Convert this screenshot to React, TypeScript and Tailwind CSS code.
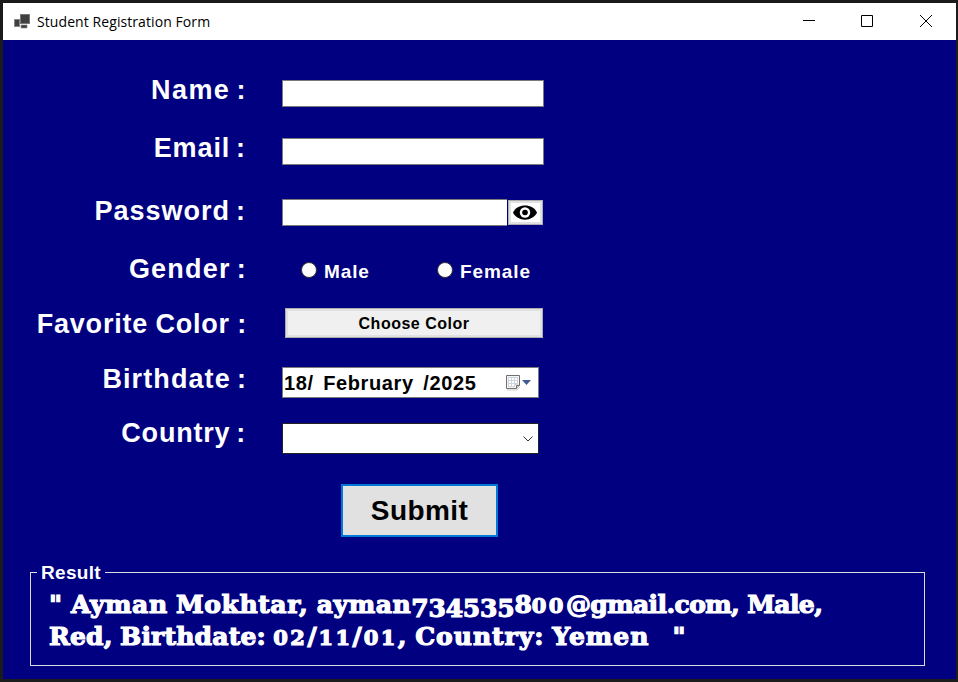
import type { ReactNode } from "react";

const ARIAL = "font-['Liberation_Sans',Arial,sans-serif] font-bold";

function Row({ label, h, spacing, end, children }: { label: string; h: string; spacing: string; end: string; children: ReactNode }) {
  return (
    <div className={`flex items-start ${h}`}>
      <div className={`w-[246px] shrink-0 text-right text-[27px] leading-[30px] whitespace-pre text-white ${ARIAL} ${spacing} ${end}`}>{label}</div>
      <div className="ml-[33px] flex items-start">{children}</div>
    </div>
  );
}

function Radio({ label, className }: { label: string; className: string }) {
  return (
    <label className={`flex items-start ${className}`}>
      <span className="block size-[16px] rounded-full border border-[#333] bg-white" />
      <span className={`ml-[7px] text-[19px] leading-[20px] tracking-[0.9px] text-white ${ARIAL}`}>{label}</span>
    </label>
  );
}

function Low({ children }: { children: ReactNode }) {
  return <span className="align-[-4px] leading-none tracking-[-0.2px]">{children}</span>;
}

function Small({ children }: { children: ReactNode }) {
  return <span className="text-[21px] leading-none tracking-[2.4px]">{children}</span>;
}

export default function App() {
  return (
    <div className="h-[682px] w-[958px] overflow-hidden border-t-[3px] border-r-2 border-b-[3px] border-l-[3px] border-[#1c1b1b] bg-[#000080]">
      <header className="flex h-[37px] items-center bg-white">
        <svg className="ml-[11px] shrink-0" width="17" height="16" viewBox="0 0 17 16">
          <rect x="6.5" y="0.5" width="9" height="9" fill="#3f3f3f" stroke="#777" />
          <rect x="0.5" y="5.5" width="5" height="7" fill="#3f3f3f" stroke="#888" />
          <rect x="7" y="11" width="6" height="3" fill="#3f3f3f" stroke="#888" strokeWidth=".6" />
        </svg>
        <h1 className="ml-[6px] font-['Open_Sans',sans-serif] text-[14px] tracking-[0.08px] whitespace-nowrap text-black">Student Registration Form</h1>
        <svg className="mr-[23px] mb-[2px] ml-auto shrink-0" width="130" height="14" viewBox="0 0 130 14" fill="none" stroke="#000">
          <path d="M0 6.5h12M58.5 1.5h11v11h-11z" />
          <path d="M117 1l12 12M129 1l-12 12" />
        </svg>
      </header>

      <main className="pt-[35px]">
        <Row label="Name :" h="h-[58px]" spacing="tracking-[1.4px] [word-spacing:-2.5px]" end="pr-[2px]">
          <input className="mt-[5px] h-[27px] w-[262px] border border-[#7a7a7a] bg-white" />
        </Row>
        <Row label="Email :" h="h-[63px]" spacing="tracking-[0.9px] [word-spacing:-2.5px]" end="pr-[3px]">
          <input className="mt-[5px] h-[27px] w-[262px] border border-[#7a7a7a] bg-white" />
        </Row>
        <Row label="Password :" h="h-[58px]" spacing="tracking-[1px] [word-spacing:-2.5px]" end="pr-[3px]">
          <input className="mt-[3px] h-[27px] w-[225px] border border-r-0 border-[#7a7a7a] bg-white" />
          <button className="mt-[4px] ml-px flex h-[25px] w-[35px] items-center border border-[#adadad] bg-white pl-[4px] shadow-[inset_0_0_0_2px_#e1e1e1]">
            <svg width="24" height="15" viewBox="0 0 24 15">
              <path d="M0 7.5C4-2 20-2 24 7.500 20 17 4 17 0 7.500z" fill="#000" />
              <circle cx="12" cy="7.5" r="5.2" fill="#fff" />
              <circle cx="12" cy="7.5" r="2.8" fill="#000" />
            </svg>
          </button>
        </Row>
        <Row label="Gender :" h="h-[55px]" spacing="tracking-[1.2px] [word-spacing:-2.5px]" end="pr-[2px]">
          <div className="mt-[8px] flex">
            <Radio label="Male" className="ml-[19px] w-[136px]" />
            <Radio label="Female" className="" />
          </div>
        </Row>
        <Row label="Favorite Color :" h="h-[55px]" spacing="tracking-[0.8px] [word-spacing:-1px]" end="pr-[2px]">
          <button className={`-mt-px ml-[3px] h-[30px] w-[258px] border border-[#adadad] bg-[#f0f0f0] pt-px text-[16px] leading-[26px] tracking-[0.5px] text-black shadow-[inset_0_0_0_2px_#e1e1e1] ${ARIAL}`}>Choose Color</button>
        </Row>
        <Row label="Birthdate :" h="h-[54px]" spacing="tracking-[1.1px] [word-spacing:-2.5px]" end="pr-[2px]">
          <div className="mt-[3px] flex h-[31px] w-[257px] items-center border border-[#7a7a7a] bg-white">
            <span className={`ml-px w-[221px] text-[20px] leading-[24px] tracking-[0.6px] whitespace-pre text-black [word-spacing:3.500px] ${ARIAL}`}>18/ February /2025</span>
            <svg className="shrink-0" width="27" height="17" viewBox="0 0 27 17">
              <path d="M2 16h10l3-3" fill="none" stroke="#ccc" />
              <path d="M1.5 1.5h13v10l-3 3h-10z" fill="#f4f5f7" stroke="#766d69" />
              <path d="M3 3h10v8h-3v2H3z" fill="#cdd4dd" />
              <path d="M4 4h2v2H4zm3 0h2v2H7zm3 0h2v2h-2zM4 7h2v2H4zm3 0h2v2H7zm3 0h2v2h-2zM4 10h2v2H4zm3 0h2v2H7z" fill="#fff" />
              <path d="M11.5 14.5v-3h3" fill="#ddd" stroke="#766d69" />
              <path d="M17 6h9l-4.500 5z" fill="#3f5e91" />
            </svg>
          </div>
        </Row>
        <Row label="Country :" h="h-[66px]" spacing="tracking-[0.8px] [word-spacing:-2.5px]" end="pr-[3px]">
          <div className="mt-[5px] flex h-[31px] w-[257px] items-center justify-end border border-[#222] bg-white pr-[5px]">
            <svg width="10" height="6" viewBox="0 0 10 6" fill="none" stroke="#333">
              <path d="M.5.5L5 5 9.500.5" />
            </svg>
          </div>
        </Row>

        <button className={`ml-[338px] block h-[53px] w-[157px] border-2 border-[#0078d7] bg-[#e1e1e1] text-[28px] leading-[49px] tracking-[0.4px] text-black ${ARIAL}`}>Submit</button>

        <fieldset className="mt-[25px] ml-[27px] h-[104px] w-[895px] border border-[#dcdcdc]">
          <legend className={`ml-[6px] h-[20px] px-[4px] text-[19px] leading-[22px] tracking-[0.3px] text-white ${ARIAL}`}>Result</legend>
          <div className="mt-[7px] ml-[18px] font-['DejaVu_Serif',serif] text-[25px] leading-[32px] font-bold whitespace-pre text-white [-webkit-text-stroke:1.2px_white]">
            <p className="h-[32px]">
              <span className="tracking-[0.6px] [word-spacing:-1px]">" Ayman Mokhtar, ayman</span>
              <Low>734535</Low>8<Small>00</Small>
              <span className="tracking-[-0.6px]">@gmail.com, Male,</span>
            </p>
            <p className="h-[32px]">
              <span className="tracking-[0.2px] [word-spacing:-1.500px]">Red, Birthdate: </span>
              <Small>02</Small>
              <span className="tracking-[2px]">/</span>
              <Small>11</Small>
              <span className="tracking-[2px]">/</span>
              <Small>01</Small>
              <span className="tracking-[1px] [word-spacing:-2px]">, Country: Yemen   "</span>
            </p>
          </div>
        </fieldset>
      </main>
    </div>
  );
}
